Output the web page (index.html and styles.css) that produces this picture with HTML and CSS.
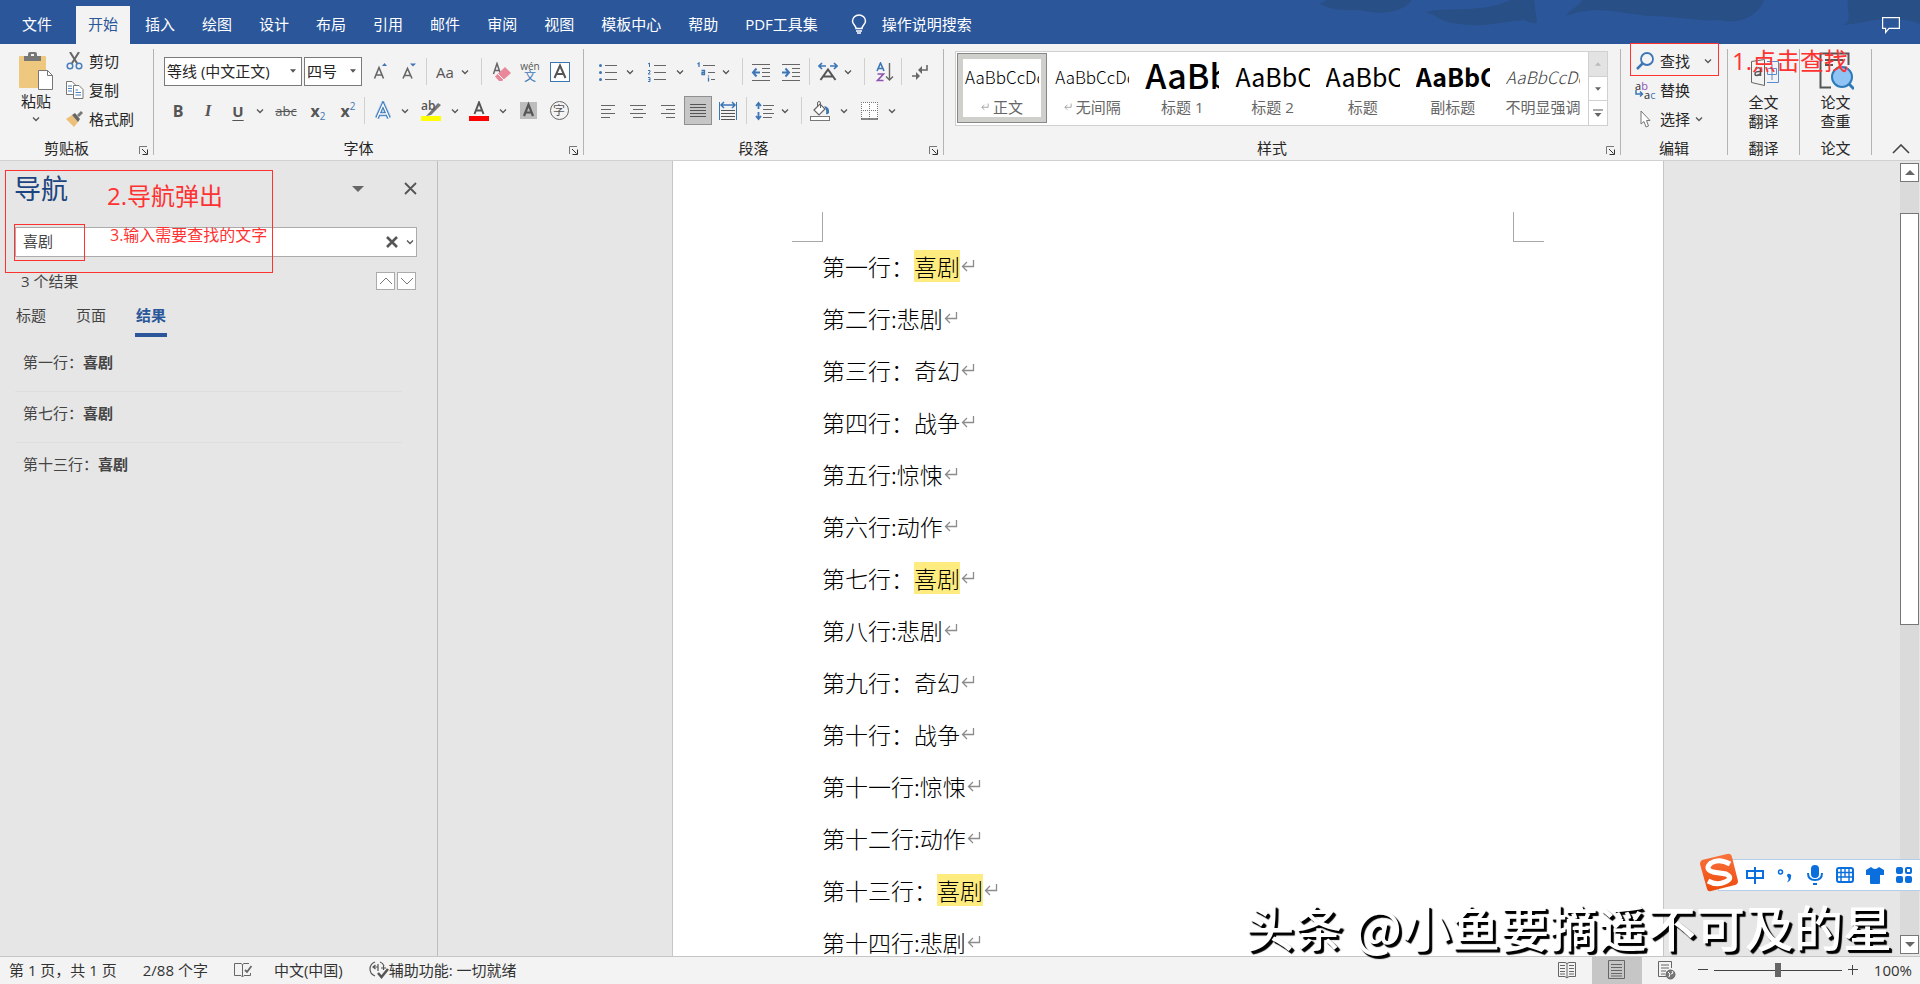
FILE: index.html
```html
<!DOCTYPE html>
<html lang="zh-CN">
<head>
<meta charset="utf-8">
<title>文档 - Word</title>
<link rel="stylesheet" href="styles.css">
</head>
<body>
<svg class="defs" aria-hidden="true">
  <symbol id="chev" viewBox="0 0 8 8"><path d="M1 2.5 4 5.5 7 2.5" fill="none" stroke="#555" stroke-width="1.3"/></symbol>
  <symbol id="launch" viewBox="0 0 9 9"><path d="M.5 8V.5H8" fill="none" stroke="#777"/><path d="M3 3 7.5 7.5M8.5 3.5V8.500H3.500" fill="none" stroke="#333"/></symbol>
  <symbol id="ret" viewBox="0 0 14 14"><path d="M12.500 1V7.500H1.500M6 3 1.500 7.500 6 12" fill="none" stroke="#8c8c8c" stroke-width="1.300"/></symbol>
  <symbol id="up" viewBox="0 0 10 6"><path d="M0 6 5 0 10 6Z"/></symbol>
  <symbol id="down" viewBox="0 0 10 6"><path d="M0 0H10L5 6Z"/></symbol>
</svg>

<header class="tabbar">
  <svg class="art" viewBox="0 0 600 44" aria-hidden="true">
    <path d="M0 4C8 8 14 11 40 10 60 16 84 12 92 0H6ZM105 12C120 16 118 22 140 24 160 28 180 22 205 20 212 24 216 24 217 22L214 0H190C160 14 130 6 105 12Z"/>
    <path d="M246 16C250 8 256 10 262 0H444C440 14 420 26 400 20 376 22 360 16 330 16 300 14 280 4 246 16ZM522 25C534 20 526 12 528 0H600V24C570 12 545 24 522 25Z"/>
  </svg>
  <nav class="tabs">
    <button class="tab file">文件</button>
    <button class="tab on">开始</button>
    <button class="tab">插入</button>
    <button class="tab">绘图</button>
    <button class="tab">设计</button>
    <button class="tab">布局</button>
    <button class="tab">引用</button>
    <button class="tab">邮件</button>
    <button class="tab">审阅</button>
    <button class="tab">视图</button>
    <button class="tab">模板中心</button>
    <button class="tab">帮助</button>
    <button class="tab">PDF工具集</button>
    <button class="tell"><svg width="16" height="20" viewBox="0 0 16 20" fill="none" stroke="#fff" stroke-width="1.500"><path d="M5 14.500C5 11.500 1.500 10.500 1.500 7A6.500 6 0 0 1 14.500 7C14.500 10.500 11 11.500 11 14.500ZM5 17H11M6 19H10"/></svg>操作说明搜索</button>
  </nav>
  <button class="comment" aria-label="批注"><svg width="18" height="17" viewBox="0 0 18 17" fill="none" stroke="#fff" stroke-width="1.200"><path d="M.6.6H17.400V11.400H7L3.600 15.500V11.400H.6Z"/></svg></button>
</header>

<section class="ribbon">
  <div class="group clip">
    <div class="body">
      <button class="paste">
        <svg width="36" height="39" viewBox="0 0 36 39"><rect x="1" y="4" width="27" height="32" rx="1" fill="#edc87e"/><path d="M6 4H10V2Q10 0 12 0H17Q19 0 19 2V4H23V9H6Z" fill="#777"/><rect x="13" y="2" width="3" height="2" fill="#f3f3f3"/><path d="M20.500 18.500H29.500L34.500 23.500V37.500H20.500Z" fill="#fff" stroke="#777"/><path d="M29.500 18.500V23.500H34.500" fill="none" stroke="#777"/></svg>
        <span>粘贴</span>
        <svg class="chev"><use href="#chev"/></svg>
      </button>
      <div class="list">
        <button><svg width="18" height="18" viewBox="0 0 18 18" fill="none"><path d="M4 0 11.500 12M13 0 5.500 12" stroke="#666" stroke-width="2"/><circle cx="4" cy="14" r="2.800" stroke="#4a7ebb" stroke-width="1.500"/><circle cx="13" cy="14" r="2.800" stroke="#4a7ebb" stroke-width="1.500"/></svg>剪切</button>
        <button><svg width="18" height="18" viewBox="0 0 18 18" fill="#fff" stroke="#777"><path d="M.5.500H6L9.500 4V13.500H.5Z"/><path d="M2 5H6M2 7.500H6M2 10H6" stroke="#4a7ebb"/><path d="M7.500 4.500H13L17 8.500V17.500H7.500Z"/><path d="M9.500 9H12M9.500 11.500H15M9.500 14H15" stroke="#4a7ebb"/></svg>复制</button>
        <button><svg width="18" height="18" viewBox="0 0 18 18"><path d="M0 9 6 5 12 12 8 17Z" fill="#edc07a"/><path d="M6 5 9 3 14 9 12 12Z" fill="#666"/><path d="M11 5 15 1 17 3 13 7Z" fill="#777"/></svg>格式刷</button>
      </div>
    </div>
    <div class="foot"><span>剪贴板</span><button class="launch" aria-label="剪贴板设置"><svg width="9" height="9"><use href="#launch"/></svg></button></div>
  </div>

  <div class="group font">
    <div class="body rows">
      <div class="row">
        <button class="combo face">等线 (中文正文)<svg width="6" height="4" fill="#555"><use href="#down"/></svg></button>
        <button class="combo size">四号<svg width="6" height="4" fill="#555"><use href="#down"/></svg></button>
        <button class="ib g8" aria-label="增大字号"><svg viewBox="0 0 20 20"><path d="M4.500 16.500 9 5.500 13.500 16.500M6 13H12" fill="none" stroke="#666" stroke-width="1.600"/><path d="M12 4 14.500 1 17 4Z" fill="#3d76b5"/></svg></button>
        <button class="ib g8" aria-label="减小字号"><svg viewBox="0 0 20 20"><path d="M5 16.500 9.500 6.500 14 16.500M6.500 13.500H12.500" fill="none" stroke="#666" stroke-width="1.600"/><path d="M12 1.500H18L15 4.500Z" fill="#3d76b5"/></svg></button>
        <i class="sep g8"></i>
        <button class="ib g8 aa">Aa</button><svg class="chev g6"><use href="#chev"/></svg>
        <i class="sep g12"></i>
        <button class="ib g10" aria-label="清除格式"><svg viewBox="0 0 20 20"><path d="M1.500 12 5 1.500 8.500 12M2.500 8.500H7.500" fill="none" stroke="#666" stroke-width="1.500"/><path d="M13 5 19 11 10 19H7L3 14.500Z" fill="#e8889a"/><path d="M6 12 12 18" stroke="#fff"/></svg></button>
        <button class="ib g8 py"><span>wén</span><b>文</b></button>
        <button class="ib g10" aria-label="字符边框"><svg viewBox="0 0 20 20"><rect x=".5" y=".5" width="19" height="19" fill="#fff" stroke="#3d76b5" /><path d="M4.500 16 10 3.500 15.500 16M6.500 12H13.500" fill="none" stroke="#555" stroke-width="2"/></svg></button>
      </div>
      <div class="row">
        <button class="ib g4 bold">B</button>
        <button class="ib g10 ital">I</button>
        <button class="ib g10 under">U</button><svg class="chev g8"><use href="#chev"/></svg>
        <button class="ib g10 strike">abc</button>
        <button class="ib g10 bold">x<sub>2</sub></button>
        <button class="ib g10 bold">x<sup>2</sup></button>
        <i class="sep g6"></i>
        <button class="ib g8" aria-label="文本效果"><svg viewBox="0 0 20 20"><path d="M4 17 10 3.500 16 17M6.500 13H13.500" fill="none" stroke="#a9cdf0" stroke-width="5"/><path d="M4 17 10 3.500 16 17M6.500 13H13.500" fill="none" stroke="#3d76b5" stroke-width="3.400"/><path d="M4 17 10 3.500 16 17M6.500 13H13.500" fill="none" stroke="#fff" stroke-width="1.400"/></svg></button><svg class="chev g8"><use href="#chev"/></svg>
        <button class="ib g12 hl" aria-label="突出显示"><span>ab</span><svg viewBox="0 0 20 20"><path d="M7 13 17 2 20 4 10 14 5 15Z" fill="#777"/><rect y="15" width="20" height="5" fill="#ff0"/></svg></button><svg class="chev g10"><use href="#chev"/></svg>
        <button class="ib g10" aria-label="字体颜色"><svg viewBox="0 0 20 20"><path d="M5.500 13 10 1.500 14.500 13M7 9.500H13" fill="none" stroke="#555" stroke-width="2"/><rect y="15" width="20" height="5" fill="#f00"/></svg></button><svg class="chev g10"><use href="#chev"/></svg>
        <button class="ib g12" aria-label="字符底纹"><svg viewBox="0 0 20 20"><rect x="1" y="1" width="17" height="17" fill="#bdbdbd"/><path d="M5 15 9.500 3.500 14 15M6.500 11.500H12.500" fill="none" stroke="#555" stroke-width="2.200"/></svg></button>
        <button class="ib g10 ring"><span>字</span></button>
      </div>
    </div>
    <div class="foot"><span>字体</span><button class="launch" aria-label="字体设置"><svg width="9" height="9"><use href="#launch"/></svg></button></div>
  </div>

  <div class="group para">
    <div class="body rows">
      <div class="row">
        <button class="ib" aria-label="项目符号"><svg viewBox="0 0 20 20"><path d="M7 3.500H19M7 10.500H19M7 17.500H19" stroke="#666"/><g fill="#3d76b5"><circle cx="2.500" cy="3.500" r="1.500"/><circle cx="2.500" cy="10.500" r="1.500"/><circle cx="2.500" cy="17.500" r="1.500"/></g></svg></button><svg class="chev g8"><use href="#chev"/></svg>
        <button class="ib g12" aria-label="编号"><svg viewBox="0 0 20 20"><path d="M8 3.500H20M8 10.500H20M8 17.500H20" stroke="#666"/><path d="M2 2 3.500 1V5M2 8.500H4V10L2 12H4.500M2 15.500H4V19.500H2M2.500 17.500H4" fill="none" stroke="#3d76b5"/></svg></button><svg class="chev g10"><use href="#chev"/></svg>
        <button class="ib g12" aria-label="多级列表"><svg viewBox="0 0 20 20"><path d="M7 3.500H19M12 10.500H19M15 17.500H19" stroke="#666"/><path d="M1.500 2 3 1V5M5.500 8.500H8.500V12.500H6V10.500H8.500M12.500 15.500V19.500M12.500 13.500V14.500" fill="none" stroke="#3d76b5" stroke-width="1.300"/></svg></button><svg class="chev g6"><use href="#chev"/></svg>
        <i class="sep g12"></i>
        <button class="ib g8" aria-label="减少缩进"><svg viewBox="0 0 20 20"><path d="M1 2.500H19M11 6.500H19M11 10.500H19M11 14.500H19M1 18.500H19" stroke="#666"/><path d="M9 10.500H2M5.500 6.500 2 10.500 5.500 14.500" fill="none" stroke="#3d76b5" stroke-width="2"/></svg></button>
        <button class="ib g10" aria-label="增加缩进"><svg viewBox="0 0 20 20"><path d="M1 2.500H19M11 6.500H19M11 10.500H19M11 14.500H19M1 18.500H19" stroke="#666"/><path d="M1 10.500H8M4.500 6.500 8 10.500 4.500 14.500" fill="none" stroke="#3d76b5" stroke-width="2"/></svg></button>
        <i class="sep g8"></i>
        <button class="ib g8" aria-label="中文版式"><svg viewBox="0 0 20 20"><path d="M2.500 18 10 7.500 17.500 18M5.500 14.500H14.500" fill="none" stroke="#555" stroke-width="2"/><path d="M8 4H1.500M4 1 1 4 4 7M12 4H18.500M16 1 19 4 16 7" fill="none" stroke="#3d76b5" stroke-width="1.600"/></svg></button><svg class="chev g6"><use href="#chev"/></svg>
        <i class="sep g12"></i>
        <button class="ib g10" aria-label="排序"><svg viewBox="0 0 20 20" fill="none"><path d="M2 9 5.500 1 9 9M3 6.500H8" stroke="#3d76b5" stroke-width="1.600"/><path d="M2.500 12H8.500L2.500 18.500H8.500" stroke="#8e52b0" stroke-width="1.600"/><path d="M14.500 1V18M11 14.500 14.500 18 18 14.500" stroke="#666" stroke-width="1.400"/></svg></button>
        <i class="sep g6"></i>
        <button class="ib g8" aria-label="显示编辑标记"><svg viewBox="0 0 20 20"><path d="M17 3V8H11M2 14H7" fill="none" stroke="#666" stroke-width="1.600"/><path d="M12 4V12L8 8ZM6 10V18L10 14Z" fill="#666"/></svg></button>
      </div>
      <div class="row">
        <button class="ib" aria-label="左对齐"><svg viewBox="0 0 20 20"><path d="M3 5.500H17M3 9.500H13M3 13.500H17M3 17.500H12" transform="translate(0 -1)" stroke="#666"/></svg></button>
        <button class="ib g10" aria-label="居中"><svg viewBox="0 0 20 20"><path d="M2 4.500H18M5 8.500H15M2 12.500H18M5 16.500H15" stroke="#666"/></svg></button>
        <button class="ib g10" aria-label="右对齐"><svg viewBox="0 0 20 20"><path d="M3 4.500H17M8 8.500H17M3 12.500H17M8 16.500H17" stroke="#666"/></svg></button>
        <button class="ib g6 pressed" aria-label="两端对齐"><svg viewBox="0 0 20 20"><path d="M2 3.500H18M2 6.500H18M2 9.500H18M2 12.500H18M2 15.500H18" stroke="#555"/></svg></button>
        <button class="ib g6" aria-label="分散对齐"><svg viewBox="0 0 20 20"><path d="M1.500 1V19M18.500 1V19" stroke="#3d76b5"/><path d="M3 4H17M6 1 3 4 6 7M14 1 17 4 14 7" fill="none" stroke="#3d76b5" stroke-width="1.500"/><path d="M3 9.500H17M3 12.500H17M3 15.500H17M3 18.500H17" stroke="#555"/></svg></button>
        <i class="sep g8"></i>
        <button class="ib g8" aria-label="行距"><svg viewBox="0 0 20 20" fill="none"><path d="M8 4.500H19M8 8.500H17M8 12.500H19M8 16.500H17" stroke="#666"/><path d="M3.500 2V8M1 5 3.500 2 6 5M3.500 11V18M1 15 3.500 18 6 15" stroke="#3d76b5" stroke-width="1.800"/></svg></button><svg class="chev g6"><use href="#chev"/></svg>
        <i class="sep g12"></i>
        <button class="ib g8" aria-label="底纹"><svg viewBox="0 0 20 20"><path d="M4 9 10 3 15 8 9 14Z" fill="#fff" stroke="#666" stroke-width="1.200"/><path d="M7.500 6V2Q7.500.500 9 .500T10.500 2V7" fill="none" stroke="#666"/><path d="M14 5Q20 6 19 12Q17 14 16 13Q17 9 14 5Z" fill="#3d76b5"/><rect x=".5" y="15.500" width="19" height="4" fill="#fff" stroke="#777"/></svg></button><svg class="chev g10"><use href="#chev"/></svg>
        <button class="ib g12" aria-label="边框"><svg viewBox="0 0 20 20"><rect x="1" y="1" width="17" height="17" fill="#fff"/><path d="M1 1.500H18M1 9.500H18M1.500 1V18M9.500 1V18M17.500 1V18" stroke="#777" stroke-dasharray="1 1"/><path d="M1 18H18" stroke="#555" stroke-width="1.400"/></svg></button><svg class="chev g8"><use href="#chev"/></svg>
      </div>
    </div>
    <div class="foot"><span>段落</span><button class="launch" aria-label="段落设置"><svg width="9" height="9"><use href="#launch"/></svg></button></div>
  </div>

  <div class="group styles">
    <div class="gallery">
      <button class="style sel"><span class="pv">AaBbCcDd</span><span class="nm"><svg width="8" height="10"><use href="#ret"/></svg> 正文</span></button>
      <button class="style"><span class="pv">AaBbCcDd</span><span class="nm"><svg width="8" height="10"><use href="#ret"/></svg> 无间隔</span></button>
      <button class="style"><span class="pv h1">AaBb</span><span class="nm">标题 1</span></button>
      <button class="style"><span class="pv h2">AaBbC</span><span class="nm">标题 2</span></button>
      <button class="style"><span class="pv h2">AaBbC</span><span class="nm">标题</span></button>
      <button class="style"><span class="pv h2 strong">AaBbC</span><span class="nm">副标题</span></button>
      <button class="style"><span class="pv em">AaBbCcDd</span><span class="nm">不明显强调</span></button>
      <div class="gscroll">
        <button class="dim" aria-label="上一行"><svg width="6" height="4" fill="#bbb"><use href="#up"/></svg></button>
        <button aria-label="下一行"><svg width="6" height="4" fill="#666"><use href="#down"/></svg></button>
        <button aria-label="更多"><svg width="10" height="8" viewBox="0 0 10 8"><path d="M0 1H10" stroke="#555"/><path d="M1.500 4H8.500L5 8Z" fill="#666"/></svg></button>
      </div>
    </div>
    <div class="foot"><span>样式</span><button class="launch" aria-label="样式设置"><svg width="9" height="9"><use href="#launch"/></svg></button></div>
  </div>

  <div class="group edit">
    <div class="list">
      <button><svg width="20" height="18" viewBox="0 0 20 18" fill="none" stroke="#3d76b5"><circle cx="12" cy="7" r="6" stroke-width="1.800"/><path d="M8 11 2 17" stroke-width="2.500"/></svg>查找<svg class="chev far"><use href="#chev"/></svg></button>
      <button><span class="swap"><span>a<em>b</em></span><span><svg width="9" height="8" viewBox="0 0 9 8" fill="none" stroke="#3d76b5" stroke-width="1.500"><path d="M1 0V4H7M5 1.500 7.500 4 5 6.500"/></svg>a<b>c</b></span></span>替换</button>
      <button><svg width="20" height="18" viewBox="0 0 20 18"><path d="M6 1V14L9 11.500 11 17 13.500 16 11.500 10.500H15Z" fill="#fff" stroke="#777"/></svg>选择<svg class="chev"><use href="#chev"/></svg></button>
    </div>
    <div class="foot"><span>编辑</span></div>
    <div class="mark find"></div>
    <div class="note one">1.点击查找</div>
  </div>

  <div class="group addin">
    <button class="big"><svg width="36" height="38" viewBox="0 0 36 38" fill="none"><path d="M5.500 9.500 18.500 7.500V33.500L5.500 30.500Z" stroke="#666"/><path d="M21 9.500H32.500V30.500H21" stroke="#5b8bd0"/><path d="M21.500 16.500H30.500V22.500H21.500ZM26 12V28" stroke="#5b8bd0"/><path d="M9.500 16.500Q14.500 14.500 14.500 18V24M14.500 19.500Q9 19 9 22T14.500 22" stroke="#555" stroke-width="1.500"/></svg><span>全文<br>翻译</span></button>
    <div class="foot"><span>翻译</span></div>
  </div>
  <div class="group addin">
    <button class="big"><svg width="36" height="38" viewBox="0 0 36 38" fill="none"><path d="M13 35.500H2.500V1.500H30.500V13" stroke="#555" stroke-width="2"/><path d="M7 8H25M7 13H15" stroke="#555" stroke-width="2"/><circle cx="24" cy="25" r="10" fill="#8fc4f5" stroke="#2c7ab8" stroke-width="2"/><path d="M31 32 36 37" stroke="#2c7ab8" stroke-width="3"/></svg><span>论文<br>查重</span></button>
    <div class="foot"><span>论文</span></div>
  </div>
  <button class="collapse" aria-label="折叠功能区"><svg width="18" height="10" viewBox="0 0 18 10" fill="none" stroke="#444" stroke-width="1.600"><path d="M1 9 9 1 17 9"/></svg></button>
</section>

<main class="work">
  <aside class="nav">
    <div class="navhead"><h1>导航</h1><button aria-label="任务窗格选项"><svg width="12" height="6" fill="#666" viewBox="0 0 12 6"><path d="M0 0H12L6 6Z"/></svg></button><button aria-label="关闭"><svg width="13" height="13" viewBox="0 0 13 13" stroke="#555" stroke-width="1.800"><path d="M1 1 12 12M12 1 1 12"/></svg></button></div>
    <div class="search">
      <input type="text" value="喜剧" aria-label="搜索文档">
      <button aria-label="清除"><svg width="12" height="12" viewBox="0 0 12 12" stroke="#555" stroke-width="2.600"><path d="M1 1 11 11M11 1 1 11"/></svg></button>
      <button aria-label="搜索选项"><svg class="chev"><use href="#chev"/></svg></button>
    </div>
    <div class="count"><span>3 个结果</span>
      <button aria-label="上一个"><svg width="14" height="8" viewBox="0 0 14 8" fill="none" stroke="#777"><path d="M1 7 7 1 13 7"/></svg></button>
      <button aria-label="下一个"><svg width="14" height="8" viewBox="0 0 14 8" fill="none" stroke="#777"><path d="M1 1 7 7 13 1"/></svg></button>
    </div>
    <div class="navtabs"><button>标题</button><button>页面</button><button class="on">结果</button></div>
    <ul class="results">
      <li>第一行：<b>喜剧</b></li>
      <li>第七行：<b>喜剧</b></li>
      <li>第十三行：<b>喜剧</b></li>
    </ul>
    <div class="mark all"></div>
    <div class="mark term"></div>
    <div class="note two">2.导航弹出</div>
    <div class="note three">3.输入需要查找的文字</div>
  </aside>

  <div class="canvas">
    <article class="page">
      <div class="corners"><i></i><i></i></div>
      <p>第一行：<mark>喜剧</mark><svg><use href="#ret"/></svg></p>
      <p>第二行:悲剧<svg><use href="#ret"/></svg></p>
      <p>第三行：奇幻<svg><use href="#ret"/></svg></p>
      <p>第四行：战争<svg><use href="#ret"/></svg></p>
      <p>第五行:惊悚<svg><use href="#ret"/></svg></p>
      <p>第六行:动作<svg><use href="#ret"/></svg></p>
      <p>第七行：<mark>喜剧</mark><svg><use href="#ret"/></svg></p>
      <p>第八行:悲剧<svg><use href="#ret"/></svg></p>
      <p>第九行：奇幻<svg><use href="#ret"/></svg></p>
      <p>第十行：战争<svg><use href="#ret"/></svg></p>
      <p>第十一行:惊悚<svg><use href="#ret"/></svg></p>
      <p>第十二行:动作<svg><use href="#ret"/></svg></p>
      <p>第十三行：<mark>喜剧</mark><svg><use href="#ret"/></svg></p>
      <p>第十四行:悲剧<svg><use href="#ret"/></svg></p>
    </article>
  </div>

  <div class="vscroll">
    <button aria-label="向上滚动"><svg width="10" height="5" fill="#666" viewBox="0 0 10 5"><path d="M0 5 5 0 10 5Z"/></svg></button>
    <div class="track"><div class="thumb"></div></div>
    <button aria-label="向下滚动"><svg width="10" height="5" fill="#666" viewBox="0 0 10 5"><path d="M0 0H10L5 5Z"/></svg></button>
  </div>
</main>

<footer class="status">
  <span class="pages">第 1 页，共 1 页</span>
  <span class="words">2/88 个字</span>
  <svg class="proof" width="18" height="16" viewBox="0 0 18 16" fill="none" stroke="#666"><path d="M8.500 2.500 7 1.500H.5V13.500H7L8.500 15 10 13.500H16.500V11M8.500 2.500V14.500M8.500 2.500 10 1.500H15"/><path d="M11 8 13 10 17.500 4" stroke-width="1.800"/></svg>
  <span class="lang">中文(中国)</span>
  <span class="acc"><svg width="20" height="18" viewBox="0 0 20 18" fill="none" stroke="#555"><path d="M6 1Q1 3 1 8T6 15M11 1Q14 2 15 5M4 6H9M6.500 4 4 6 6.500 8M9 3V10M12 7H17M14.500 5V9" stroke-width="1.200"/><path d="M9 12 12.500 16 19 8" stroke-width="2.500"/></svg>辅助功能: 一切就绪</span>
  <button class="view first" aria-label="阅读视图"><svg width="18" height="18" viewBox="0 0 18 18" fill="none" stroke="#666"><path d="M9 2.500 7 1.500H.5V15.500H7L9 17 11 15.500H17.500V1.500H11L9 2.500V17M2 4.500H7M2 7.500H7M2 10.500H7M2 13H7M11 4.500H16M11 7.500H16M11 10.500H16M11 13H16"/></svg></button>
  <button class="view on" aria-label="页面视图"><svg width="18" height="20" viewBox="0 0 18 20" fill="none" stroke="#666"><path d="M.5.500H16.500V18.500H.5ZM3 4.500H14M3 7.500H14M3 10.500H14M3 13.500H14M3 16H14"/></svg></button>
  <button class="view" aria-label="Web 版式"><svg width="18" height="19" viewBox="0 0 18 19" fill="none" stroke="#666"><path d="M8 15.500H.5V.5H13.500V7M3 4H11M3 7H11M3 10H8M3 13H7"/><circle cx="12.500" cy="13.500" r="4.500" fill="#777"/><path d="M10 11 12 13 11 16M14 10 15 12 13 13" stroke="#fff"/></svg></button>
  <div class="zoom">
    <button aria-label="缩小"><svg width="10" height="10" stroke="#444"><path d="M0 4.500H10"/></svg></button>
    <input type="range" min="0" max="100" value="50" aria-label="缩放">
    <button aria-label="放大"><svg width="10" height="10" stroke="#444"><path d="M0 4.500H10M4.500 0V10"/></svg></button>
    <span>100%</span>
  </div>
</footer>

<div class="ime">
  <svg class="sogou" width="40" height="40" viewBox="0 0 40 40"><defs><linearGradient id="o" x2="0" y2="1"><stop stop-color="#f9733d"/><stop offset="1" stop-color="#ee4a0c"/></linearGradient></defs><path d="M3 7 28 1Q32 0 33 4L39 28Q39 31 36 32L12 38Q9 39 8 36L1 11Q1 8 3 7Z" fill="url(#o)"/><path d="M31 11Q20 5 12 10 5 16 14 19L27 21Q35 25 26 29 18 33 9 28" fill="none" stroke="#fff" stroke-width="5"/></svg>
  <svg width="18" height="18" viewBox="0 0 18 18" fill="none" stroke="#0a6fdc" stroke-width="2"><path d="M1 5H17V12H1ZM9 1V18"/></svg>
  <svg width="18" height="18" viewBox="0 0 18 18"><circle cx="4.500" cy="6" r="2" fill="none" stroke="#0a6fdc" stroke-width="1.600"/><path d="M11 9A2.200 2.200 0 1 1 15 11Q15 15 11 16.500 13 14 12.500 12 11 11 11 9Z" fill="#0a6fdc"/></svg>
  <svg width="18" height="20" viewBox="0 0 18 20" fill="none" stroke="#0a6fdc" stroke-width="2"><rect x="5" y="0" width="8" height="13" rx="4" fill="#0a6fdc" stroke="none"/><path d="M2 8Q2 15 9 15T16 8M7 19H11"/></svg>
  <svg width="18" height="16" viewBox="0 0 18 16"><rect x="1" y="1" width="16" height="14" rx="2" fill="#fff" stroke="#0a6fdc" stroke-width="2"/><path d="M1 5.500H17M1 10H17M5 1V15M9 1V10M13 1V15" stroke="#0a6fdc" stroke-width="1.400"/></svg>
  <svg width="18" height="18" viewBox="0 0 18 18"><path d="M5 1Q9 5 13 1L18 4V9H14V17Q14 18 13 18H5Q4 18 4 17V9H0V4Z" fill="#0a6fdc"/></svg>
  <svg width="16" height="16" viewBox="0 0 16 16" fill="#0a6fdc"><rect width="7" height="7" rx="2"/><rect x="10" y="1" width="5" height="5" rx="1" fill="none" stroke="#0a6fdc" stroke-width="2"/><rect y="9" width="7" height="7" rx="2"/><rect x="9" y="9" width="7" height="7" rx="2"/></svg>
</div>
<div class="watermark">头条 @小鱼要摘遥不可及的星</div>
</body>
</html>
```
FILE: styles.css
```css
* { box-sizing: border-box; }
body {
  margin: 0;
  height: 100vh;
  display: flex;
  flex-direction: column;
  overflow: hidden;
  position: relative;
  background: #e6e6e6;
  color: #262626;
  font: 15px/20px "Open Sans", "Noto Sans CJK SC", sans-serif;
}
button, input { font: inherit; color: inherit; }
button { border: 0; padding: 0; background: none; white-space: nowrap; }
svg { display: block; flex: none; }
.defs { position: absolute; width: 0; height: 0; }
.chev { width: 8px; height: 8px; }
.g4 { margin-left: 4px; }
.g6 { margin-left: 6px; }
.g8 { margin-left: 8px; }
.g10 { margin-left: 10px; }
.g12 { margin-left: 12px; }

/* tab bar */
.tabbar {
  position: relative;
  flex: none;
  display: flex;
  justify-content: space-between;
  height: 44px;
  background: #2b579a;
  color: #fff;
}
.art { position: absolute; right: 0; top: 0; width: 600px; height: 44px; fill: #294f87; }
.tabs { position: relative; display: flex; gap: 3px; padding: 6px 0 0 10px; }
.tab { height: 38px; padding: 0 12px 2px; }
.tab.file { margin-right: 9px; }
.tab.on { background: #f3f3f3; color: #2b579a; }
.tell { display: flex; align-items: center; gap: 15px; margin-left: 18px; padding-bottom: 2px; }
.comment { position: relative; margin-right: 20px; padding-top: 6px; }

/* ribbon */
.ribbon {
  flex: none;
  display: flex;
  height: 117px;
  background: #f3f3f3;
  border-bottom: 1px solid #d0d0d0;
}
.group {
  position: relative;
  flex: none;
  display: flex;
  flex-direction: column;
  justify-content: space-between;
  margin: 5px 0;
  border-right: 1px solid #b4b4b4;
}
.clip { width: 154px; }
.font { width: 430px; }
.para { width: 360px; }
.styles { flex: 1 1 0; min-width: 0; }
.edit { width: 107px; }
.addin { width: 72px; }
.foot { display: flex; height: 20px; align-items: center; margin-bottom: -3px; }
.foot span { flex: 1; text-align: center; }
.launch { width: 20px; padding: 4px 0 0 6px; }
.clip .body { display: flex; }
.paste { display: flex; flex-direction: column; align-items: center; width: 60px; margin-left: 6px; padding-top: 3px; }
.paste .chev { margin-top: 4px; }
.list { display: flex; flex-direction: column; }
.list button { display: flex; align-items: center; gap: 5px; height: 29px; }
.clip .list { margin-top: -3px; }
.rows { display: flex; flex-direction: column; gap: 10px; padding: 8px 0 0 10px; }
.para .rows { padding-left: 14px; }
.row { display: flex; align-items: center; height: 29px; }
.ib { position: relative; width: 20px; height: 20px; display: flex; align-items: center; justify-content: center; flex: none; color: #555; }
.ib svg { width: 20px; height: 20px; }
.sep { width: 1px; height: 27px; background: #d0d0d0; }
.combo {
  display: flex;
  align-items: center;
  justify-content: space-between;
  height: 29px;
  padding: 0 5px 1px 2px;
  background: #fff;
  border: 1px solid #7a7a7a;
}
.face { width: 138px; margin-right: 2px; }
.size { width: 58px; }
.bold { font-weight: 700; font-size: 16px; }
.ital { font: italic bold 17px "Liberation Serif", serif; }
.under { font-weight: 700; text-decoration: underline; text-underline-offset: 3px; }
.strike { width: 24px; font-size: 13px; text-decoration: line-through; }
sub, sup { font-size: 10px; line-height: 10px; font-weight: 400; color: #3d76b5; }
sub { align-self: flex-end; }
sup { align-self: flex-start; }
.py { flex-direction: column; font-size: 10px; line-height: 9px; }
.py b { font-size: 12px; line-height: 11px; font-weight: 400; color: #3d76b5; }
.hl span { position: absolute; left: 0; top: 0; font-size: 12px; line-height: 10px; font-weight: 600; }
.ring span { width: 19px; height: 19px; border: 1px solid #666; border-radius: 50%; font-size: 12px; line-height: 17px; }
.pressed { width: 28px; height: 29px; background: #c6c6c6; border: 1px solid #909090; }

.gallery {
  display: flex;
  height: 75px;
  margin: 2px 12px 0 11px;
  padding-left: 1px;
  background: #fff;
  border: 1px solid #d0d0d0;
}
.style { display: flex; flex-direction: column; flex: 1 1 90px; min-width: 0; height: 70px; margin-top: 1px; padding: 5px 7px 0; border: 1px solid transparent; }
.style.sel { border-color: #888; box-shadow: inset 0 0 0 5px #cfcfcb; }
.pv { display: block; align-self: stretch; height: 38px; overflow: hidden; font: 300 17px/36px "Noto Sans CJK SC", sans-serif; color: #000; text-align: left; }
.pv.h1 { font-size: 34px; line-height: 31px; font-weight: 500; }
.pv.h2 { font-size: 25px; line-height: 34px; font-weight: 400; }
.pv.strong { font-weight: 700; }
.pv.em { font-style: italic; color: #404040; }
.nm { display: flex; justify-content: center; align-items: center; gap: 4px; color: #666; }
.gscroll { flex: none; width: 19px; display: flex; flex-direction: column; border-left: 1px solid #d0d0d0; }
.gscroll button { flex: 1; display: grid; place-items: center; }
.gscroll button + button { border-top: 1px solid #d0d0d0; }
.gscroll .dim { background: #e3e3e3; }

.edit .list { margin: -3px 0 0 14px; }
.edit .far { margin-left: 9px; }
.swap { width: 20px; font-size: 11px; line-height: 9px; text-align: left; }
.swap > span { display: flex; }
.swap em { font-style: normal; color: #8e52b0; }
.swap b { font-weight: 400; color: #3d76b5; }
.big { display: flex; flex-direction: column; align-items: center; padding-top: 3px; line-height: 19px; gap: 3px; }
.collapse { width: 48px; display: flex; align-items: flex-end; padding: 0 0 6px 20px; }

/* callouts drawn over the window */
.mark { position: absolute; border: 1px solid #ff3232; pointer-events: none; }
.note { position: absolute; color: #ff3232; white-space: nowrap; font-size: 24px; line-height: 30px; z-index: 2; }
.find { left: 9px; top: -6px; width: 89px; height: 33px; }
.one { left: 111px; top: -3px; }
.all { left: 5px; top: 9px; width: 268px; height: 103px; }
.term { left: 14px; top: 63px; width: 71px; height: 37px; }
.two { left: 107px; top: 20px; }
.three { left: 110px; top: 59px; font-size: 16px; }

/* navigation pane */
.work { flex: 1; min-height: 0; display: flex; }
.nav { position: relative; flex: none; width: 438px; border-right: 1px solid #bdbdbd; color: #444; }
.navhead { display: flex; align-items: center; height: 52px; padding: 3px 20px 0 14px; }
.navhead h1 { flex: 1; margin: 0; font-size: 27px; line-height: 40px; font-weight: 400; color: #1c4580; }
.navhead button { display: grid; place-items: center; width: 14px; height: 20px; }
.navhead button + button { margin-left: 38px; }
.search { display: flex; align-items: center; height: 30px; margin: 14px 20px 0 15px; background: #fff; border: 1px solid #ababab; }
.search input { flex: 1; min-width: 0; height: 26px; padding: 0 0 4px 7px; border: 0; background: none; outline: 0; }
.search button + button { margin: 0 2px 0 8px; }
.count { display: flex; align-items: center; gap: 2px; padding: 14px 21px 0 21px; }
.count span { flex: 1; }
.count button { display: grid; place-items: center; width: 19px; height: 18px; background: #fff; border: 1px solid #ababab; }
.navtabs { display: flex; gap: 28px; padding: 14px 15px 0; }
.navtabs button { width: 32px; height: 32px; padding-bottom: 8px; border-bottom: 4px solid transparent; }
.navtabs .on { font-weight: 700; color: #2b579a; border-color: #2b579a; }
.results { margin: 4px 35px 0 15px; padding: 0; list-style: none; }
.results li { height: 51px; padding: 11px 8px; border-bottom: 1px solid #dedede; }
.results li:last-child { border: 0; }

/* document */
.canvas { flex: 1; min-width: 0; display: flex; justify-content: center; padding-right: 2px; overflow: hidden; }
.page { width: 992px; padding: 51px 119px 0; background: #fff; border: solid #c6c6c6; border-width: 0 1px; }
.corners { display: flex; justify-content: space-between; height: 30px; margin-bottom: -2px; }
.corners i { width: 31px; border-bottom: 1px solid #a8a8a8; }
.corners i:first-child { border-right: 1px solid #a8a8a8; }
.corners i:last-child { border-left: 1px solid #a8a8a8; }
.page p { display: flex; align-items: center; height: 52px; margin: 0 0 0 30px; font: 300 23px/32px "Noto Sans CJK SC", sans-serif; color: #000; }
.page mark { background: #ffec80; color: inherit; }
.page p svg { width: 14px; height: 14px; margin-left: 1px; }
.vscroll { flex: none; width: 20px; padding: 2px 1px 2px 0; display: flex; flex-direction: column; }
.vscroll button { display: grid; place-items: center; height: 19px; background: #fff; border: 1px solid #777; }
.track { flex: 1; padding-top: 31px; background: #dadada; }
.thumb { height: 57%; background: #fff; border: 1px solid #777; }

/* status bar */
.status { flex: none; display: flex; align-items: center; height: 28px; padding: 0 8px 1px 9px; background: #f3f3f3; border-top: 1px solid #c6c6c6; color: #333; }
.words { margin-left: 26px; }
.proof { margin-left: 26px; }
.lang { margin-left: 22px; }
.acc { display: flex; align-items: center; margin-left: 26px; }
.view { display: grid; place-items: center; width: 50px; height: 27px; }
.view.first { margin-left: auto; }
.view.on { background: #c6c6c6; }
.zoom { display: flex; align-items: center; gap: 6px; margin-left: 6px; }
.zoom span { margin-left: 10px; }
.zoom input { width: 128px; height: 14px; margin: 0; appearance: none; background: linear-gradient(#444, #444) center / 100% 1px no-repeat; }
.zoom input::-webkit-slider-thumb { appearance: none; width: 6px; height: 14px; background: #666; }

/* input method bar and overlay text */
.ime { position: absolute; right: 0; bottom: 93px; display: flex; align-items: center; gap: 12px; height: 32px; padding: 0 8px 0 27px; background: #fff; border: 1px solid #b6cdea; border-right: 0; }
.sogou { position: absolute; left: -20px; top: -7px; }
.watermark { position: absolute; right: 28px; bottom: 25px; font: 500 49px/66px "Noto Sans CJK SC", sans-serif; color: #fff; text-shadow: 2px 2px 1px #000, 3px 3px 1px #000; white-space: nowrap; }
```
